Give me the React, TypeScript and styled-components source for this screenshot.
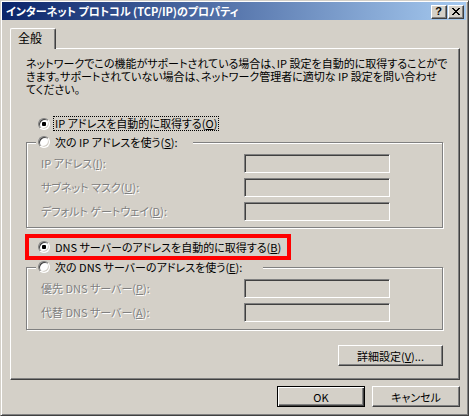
import styled, { createGlobalStyle, css } from "styled-components";

const face = "#D4D0C8";
const shadow = "#808080";
const darkShadow = "#404040";
const highlight = "#FFFFFF";

const GlobalStyle = createGlobalStyle`
  html, body {
    margin: 0;
    padding: 0;
    background: ${face};
  }
  body {
    font-family: "Noto Sans CJK JP", "Liberation Sans", sans-serif;
    font-size: 11px;
    font-feature-settings: "palt";
    color: #000;
  }
  * {
    box-sizing: border-box;
  }
`;

const Window = styled.div`
  width: 469px;
  height: 416px;
  display: flex;
  flex-direction: column;
  background: ${face};
  border: 1px solid;
  border-color: ${face} ${darkShadow} ${darkShadow} ${face};
  box-shadow: inset 1px 1px ${highlight}, inset -1px -1px ${shadow};
  padding: 1px 2px 2px 1px;
`;

const TitleBar = styled.div`
  height: 18px;
  flex-shrink: 0;
  display: flex;
  align-items: flex-start;
  justify-content: space-between;
  padding: 0 2px 0 4px;
  background: linear-gradient(to right, #0a246a, #a6caf0);
`;

const TitleText = styled.span`
  color: #fff;
  font-weight: bold;
  font-size: 11px;
  line-height: 18px;
  white-space: nowrap;
`;

const CaptionButtons = styled.div`
  display: flex;
  gap: 1px;
  padding-top: 3px;
`;

const raised = css`
  background: ${face};
  border: 1px solid;
  border-color: ${highlight} ${darkShadow} ${darkShadow} ${highlight};
  box-shadow: inset -1px -1px ${shadow};
`;

const CaptionButton = styled.div`
  ${raised};
  width: 16px;
  height: 14px;
  display: flex;
  align-items: center;
  justify-content: center;
  font-family: "Liberation Sans", sans-serif;
  font-weight: bold;
  font-size: 11px;
  line-height: 1;
  padding: 0 1px 1px 0;
`;

const Body = styled.div`
  display: flex;
  flex-direction: column;
  padding: 8px 0 0 8px;
`;

const TabStrip = styled.div`
  display: flex;
`;

const Tab = styled.div`
  position: relative;
  z-index: 1;
  width: 46px;
  height: 21px;
  margin-bottom: -1px;
  padding-left: 7px;
  font-size: 12px;
  line-height: 18px;
  background: ${face};
  border-top: 1px solid ${highlight};
  border-left: 1px solid ${highlight};
  border-right: 1px solid ${darkShadow};
  border-radius: 2px 2px 0 0;
  box-shadow: inset -1px 0 ${shadow};
`;

const Panel = styled.div`
  width: 450px;
  height: 332px;
  display: flex;
  flex-direction: column;
  padding: 8px 16px 0 15px;
  border: 1px solid;
  border-color: ${highlight} ${darkShadow} ${darkShadow} ${highlight};
  box-shadow: inset -1px -1px ${shadow};
`;

const Description = styled.p`
  margin: 0;
  line-height: 13px;
  white-space: nowrap;
`;

const RadioRow = styled.div<{ $indent: number; $height: number; $top?: number }>`
  display: flex;
  align-items: center;
  height: ${(p) => p.$height}px;
  margin-top: ${(p) => p.$top ?? 0}px;
  padding-left: ${(p) => p.$indent}px;
  white-space: nowrap;
`;

const Radio = styled.span<{ $checked?: boolean }>`
  position: relative;
  flex-shrink: 0;
  width: 12px;
  height: 12px;
  border-radius: 50%;
  background: ${highlight};
  border: 1px solid;
  border-color: ${shadow} ${highlight} ${highlight} ${shadow};
  box-shadow: inset 1px 1px ${darkShadow}, inset -1px -1px ${face};

  &::after {
    content: "";
    display: ${(p) => (p.$checked ? "block" : "none")};
    position: absolute;
    left: 3px;
    top: 3px;
    width: 4px;
    height: 4px;
    border-radius: 1px;
    background: #000;
  }
`;

const RadioLabel = styled.span<{ $focused?: boolean }>`
  margin-left: 3px;
  padding: 0 1px;
  height: 15px;
  line-height: 13px;
  border: 1px dotted ${(p) => (p.$focused ? "#000" : "transparent")};
`;

const Group = styled.div<{ $gap: number }>`
  margin-top: ${(p) => p.$gap}px;
  border: 1px solid ${shadow};
  box-shadow: 1px 1px ${highlight}, inset 1px 1px ${highlight};
`;

const Legend = styled.div<{ $width: number }>`
  display: flex;
  align-items: center;
  width: ${(p) => p.$width}px;
  height: 14px;
  margin: -8px 0 0 9px;
  padding-left: 2px;
  background: ${face};
  white-space: nowrap;
`;

const FieldGrid = styled.div<{ $bottom: number }>`
  display: grid;
  grid-template-columns: 203px 146px;
  row-gap: 5px;
  align-items: center;
  padding: 5px 0 ${(p) => p.$bottom}px 14px;
`;

const FieldLabel = styled.span`
  color: ${shadow};
  text-shadow: 1px 1px ${highlight};
  white-space: nowrap;
  line-height: 13px;
`;

const TextBox = styled.div`
  height: 19px;
  background: ${face};
  border: 1px solid;
  border-color: ${shadow} ${highlight} ${highlight} ${shadow};
  box-shadow: inset 1px 1px ${darkShadow}, inset -1px -1px ${face};
`;

const Highlight = styled.div`
  width: 266px;
  height: 26px;
  margin: 6px 0 0 -1px;
  border: 4px solid #ff0000;
`;

const ButtonRow = styled.div<{ $top: number }>`
  display: flex;
  justify-content: flex-end;
  margin-top: ${(p) => p.$top}px;
`;

const Button = styled.div<{ $width: number; $default?: boolean }>`
  width: ${(p) => p.$width}px;
  height: 21px;
  display: flex;
  align-items: center;
  justify-content: center;
  background: ${face};
  white-space: nowrap;
  ${(p) =>
    p.$default
      ? css`
          border: 1px solid #000;
          box-shadow: inset 1px 1px ${highlight}, inset -1px -1px ${darkShadow},
            inset -2px -2px ${shadow};
        `
      : css`
          border: 1px solid;
          border-color: ${highlight} ${darkShadow} ${darkShadow} ${highlight};
          box-shadow: inset -1px -1px ${shadow};
        `}
`;

const Footer = styled.div`
  width: 450px;
  display: flex;
  justify-content: flex-end;
  gap: 7px;
  margin-top: 6px;
`;

const closeGlyph = [
  "11000011",
  "01100110",
  "00111100",
  "00011000",
  "00111100",
  "01100110",
  "11000011",
];

const CloseIcon = () => (
  <svg width="8" height="7" viewBox="0 0 8 7" shapeRendering="crispEdges">
    {closeGlyph.flatMap((row, y) =>
      row.split("").map((c, x) =>
        c === "1" ? <rect key={`${x}-${y}`} x={x} y={y} width="1" height="1" fill="#000" /> : null
      )
    )}
  </svg>
);

const Acc = ({ k }: { k: string }) => (
  <>
    (<u>{k}</u>)
  </>
);

export default function App() {
  return (
    <>
      <GlobalStyle />
      <Window>
        <TitleBar>
          <TitleText>インターネット プロトコル (TCP/IP)のプロパティ</TitleText>
          <CaptionButtons>
            <CaptionButton>?</CaptionButton>
            <CaptionButton>
              <CloseIcon />
            </CaptionButton>
          </CaptionButtons>
        </TitleBar>
        <Body>
          <TabStrip>
            <Tab>全般</Tab>
          </TabStrip>
          <Panel>
            <Description>
              ネットワークでこの機能がサポートされている場合は、IP 設定を自動的に取得することがで
              <br />
              きます。サポートされていない場合は、ネットワーク管理者に適切な IP 設定を問い合わせ
              <br />
              てください。
            </Description>

            <RadioRow $indent={12} $height={15} $top={20}>
              <Radio $checked />
              <RadioLabel $focused>
                IP アドレスを自動的に取得する<Acc k="O" />
              </RadioLabel>
            </RadioRow>

            <Group $gap={11}>
              <Legend $width={157}>
                <Radio />
                <RadioLabel>
                  次の IP アドレスを使う<Acc k="S" />:
                </RadioLabel>
              </Legend>
              <FieldGrid $bottom={6}>
                <FieldLabel>
                  IP アドレス<Acc k="I" />:
                </FieldLabel>
                <TextBox />
                <FieldLabel>
                  サブネット マスク<Acc k="U" />:
                </FieldLabel>
                <TextBox />
                <FieldLabel>
                  デフォルト ゲートウェイ<Acc k="D" />:
                </FieldLabel>
                <TextBox />
              </FieldGrid>
            </Group>

            <Highlight>
              <RadioRow $indent={9} $height={18}>
                <Radio $checked />
                <RadioLabel>
                  DNS サーバーのアドレスを自動的に取得する<Acc k="B" />
                </RadioLabel>
              </RadioRow>
            </Highlight>

            <Group $gap={7}>
              <Legend $width={227}>
                <Radio />
                <RadioLabel>
                  次の DNS サーバーのアドレスを使う<Acc k="E" />:
                </RadioLabel>
              </Legend>
              <FieldGrid $bottom={7}>
                <FieldLabel>
                  優先 DNS サーバー<Acc k="P" />:
                </FieldLabel>
                <TextBox />
                <FieldLabel>
                  代替 DNS サーバー<Acc k="A" />:
                </FieldLabel>
                <TextBox />
              </FieldGrid>
            </Group>

            <ButtonRow $top={15}>
              <Button $width={105}>
                詳細設定<Acc k="V" />...
              </Button>
            </ButtonRow>
          </Panel>
          <Footer>
            <Button $width={88} $default>
              OK
            </Button>
            <Button $width={88}>キャンセル</Button>
          </Footer>
        </Body>
      </Window>
    </>
  );
}
